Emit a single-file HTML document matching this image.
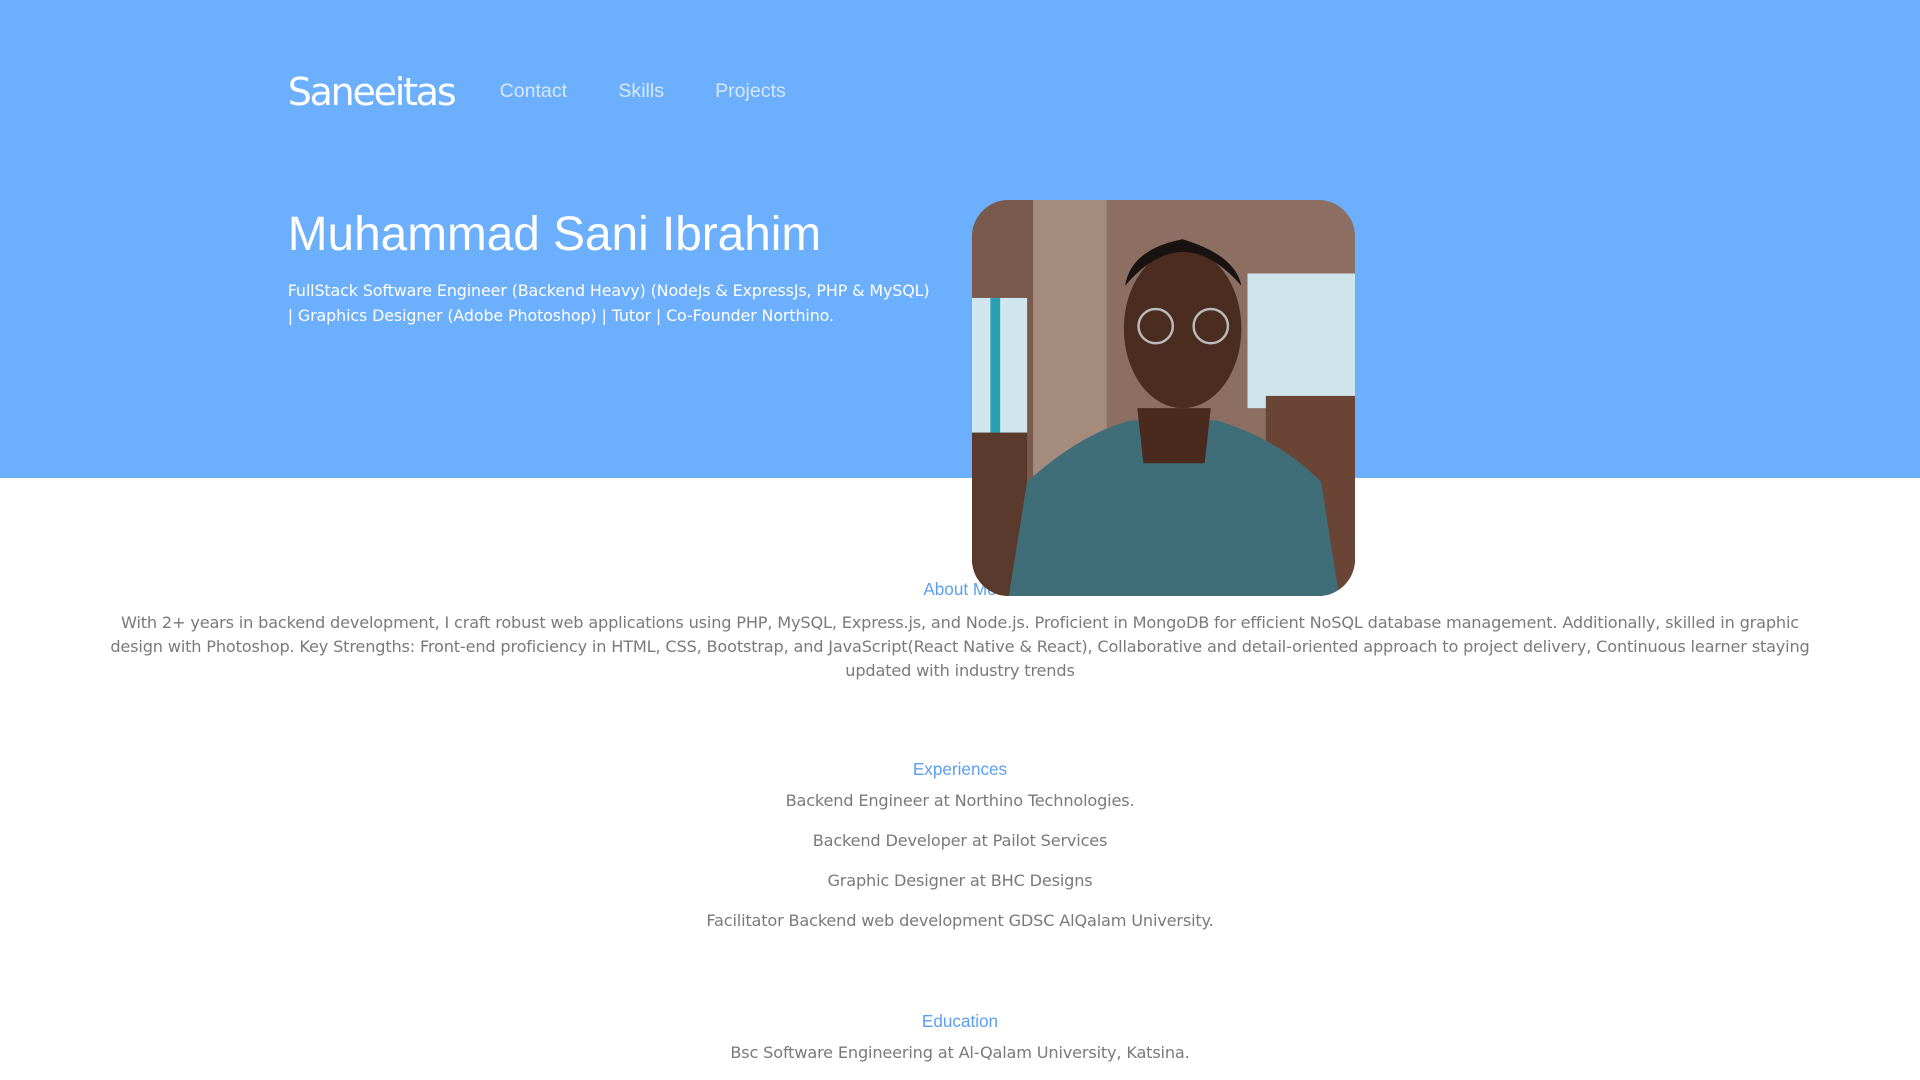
<!DOCTYPE html>
<html><head><meta charset="utf-8"><style>
html,body{margin:0;padding:0;background:#fff;overflow:hidden}
body{zoom:1.22449;width:1568px;height:882px;position:relative;font-family:"DejaVu Sans",sans-serif}
.hero{position:absolute;left:0;top:0;width:1568px;height:390px;background:#6caffc}
.logo{position:absolute;left:235px;top:57px;font:31px "DejaVu Sans",sans-serif;color:#fff;letter-spacing:-1.8px}
.nav{position:absolute;top:65px;font:16px "Liberation Sans",sans-serif;color:#d6e8fd}
h1{position:absolute;left:235px;top:169px;margin:0;font:400 39px "Liberation Sans",sans-serif;color:#fff;white-space:nowrap}
.sub{position:absolute;left:235px;top:228px;width:560px;font-size:13px;line-height:20px;color:#fff;letter-spacing:-0.1px}
.photo{position:absolute;left:794px;top:163px;width:313px;height:324px;border-radius:30px;overflow:hidden;background:#8a6d60}
.c{position:absolute;left:0;width:1568px;text-align:center}
.h{font:14px "Liberation Sans",sans-serif;color:#5c9ff0}
.t{font-size:13.2px;color:#7a7a7a;letter-spacing:-0.15px}
</style></head><body>
<div class="hero"></div>
<div class="logo">Saneeitas</div>
<div class="nav" style="left:408px">Contact</div>
<div class="nav" style="left:505px">Skills</div>
<div class="nav" style="left:584px">Projects</div>
<h1>Muhammad Sani Ibrahim</h1>
<div class="sub">FullStack Software Engineer (Backend Heavy) (NodeJs &amp; ExpressJs, PHP &amp; MySQL)<br>| Graphics Designer (Adobe Photoshop) | Tutor | Co-Founder Northino.</div>
<div class="c h" style="top:473px">About Me</div>
<div class="photo">
<svg width="313" height="324" viewBox="0 0 313 324">
<rect width="313" height="324" fill="#8c6f62"/>
<rect x="0" y="0" width="50" height="324" fill="#7a5a4c"/>
<rect x="50" y="0" width="60" height="324" fill="#a58a7e"/>
<rect x="0" y="80" width="45" height="110" fill="#cfe6ee"/>
<rect x="15" y="80" width="8" height="110" fill="#2b9fb4"/>
<rect x="225" y="60" width="88" height="110" fill="#cfe3ea"/>
<rect x="0" y="190" width="45" height="134" fill="#5a3a2c"/>
<rect x="240" y="160" width="73" height="164" fill="#6a4434"/>
<path d="M30 324 L45 230 Q90 190 130 180 L200 180 Q250 195 285 230 L300 324 Z" fill="#3f6e78"/>
<path d="M135 170 L195 170 L190 215 L140 215 Z" fill="#4a2a1f"/>
<ellipse cx="172" cy="105" rx="48" ry="65" fill="#4b2c20"/>
<path d="M125 70 Q172 15 220 70 Q215 45 172 32 Q130 40 125 70Z" fill="#1a1210"/>
<circle cx="150" cy="103" r="14" fill="none" stroke="#bbb" stroke-width="2"/>
<circle cx="195" cy="103" r="14" fill="none" stroke="#bbb" stroke-width="2"/>
</svg></div>
<div class="c t" style="top:499px;line-height:19.5px"><div style="width:1410px;margin:0 auto">With 2+ years in backend development, I craft robust web applications using PHP, MySQL, Express.js, and Node.js. Proficient in MongoDB for efficient NoSQL database management. Additionally, skilled in graphic design with Photoshop. Key Strengths: Front-end proficiency in HTML, CSS, Bootstrap, and JavaScript(React Native &amp; React), Collaborative and detail-oriented approach to project delivery, Continuous learner staying updated with industry trends</div></div>
<div class="c h" style="top:620px">Experiences</div>
<div class="c t" style="top:646px">Backend Engineer at Northino Technologies.</div>
<div class="c t" style="top:679px">Backend Developer at Pailot Services</div>
<div class="c t" style="top:711px">Graphic Designer at BHC Designs</div>
<div class="c t" style="top:744px">Facilitator Backend web development GDSC AlQalam University.</div>
<div class="c h" style="top:826px">Education</div>
<div class="c t" style="top:852px">Bsc Software Engineering at Al-Qalam University, Katsina.</div>
</body></html>
